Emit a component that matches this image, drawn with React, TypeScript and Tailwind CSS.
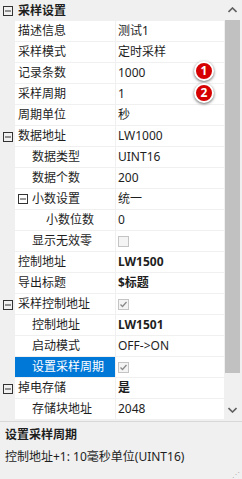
import React from "react";

type Row = {
  label: string;
  value?: string;
  level: number;
  expander?: boolean;
  category?: boolean;
  bold?: boolean;
  check?: boolean;
  checked?: boolean;
  selected?: boolean;
};

const rows: Row[] = [
  { label: "采样设置", level: 0, expander: true, category: true },
  { label: "描述信息", value: "测试1", level: 0 },
  { label: "采样模式", value: "定时采样", level: 0 },
  { label: "记录条数", value: "1000", level: 0 },
  { label: "采样周期", value: "1", level: 0 },
  { label: "周期单位", value: "秒", level: 0 },
  { label: "数据地址", value: "LW1000", level: 0, expander: true },
  { label: "数据类型", value: "UINT16", level: 1 },
  { label: "数据个数", value: "200", level: 1 },
  { label: "小数设置", value: "统一", level: 1, expander: true },
  { label: "小数位数", value: "0", level: 2 },
  { label: "显示无效零", level: 1, check: true },
  { label: "控制地址", value: "LW1500", level: 0, bold: true },
  { label: "导出标题", value: "$标题", level: 0, bold: true },
  { label: "采样控制地址", level: 0, expander: true, check: true, checked: true },
  { label: "控制地址", value: "LW1501", level: 1, bold: true },
  { label: "启动模式", value: "OFF->ON", level: 1 },
  { label: "设置采样周期", level: 1, check: true, checked: true, selected: true },
  { label: "掉电存储", value: "是", level: 0, expander: true, bold: true },
  { label: "存储块地址", value: "2048", level: 1 },
];

const indent = ["pl-[3px]", "pl-[17px]", "pl-[31px]"];

function Minus({ className }: { className?: string }) {
  return (
    <svg width="10" height="10" viewBox="0 0 10 10" className={className}>
      <rect x="0.5" y="0.5" width="9" height="9" fill="none" stroke="#333" />
      <line x1="2" y1="5" x2="8" y2="5" stroke="#333" />
    </svg>
  );
}

function Check({ checked }: { checked?: boolean }) {
  return (
    <div className="flex h-[11px] w-[11px] items-center justify-center border border-[#c4c4c4] bg-[#f4f4f4]">
      {checked && (
        <svg width="9" height="9" viewBox="0 0 9 9">
          <path d="M1.5 4.5 L3.5 6.5 L7.5 2" fill="none" stroke="#8a8a8a" strokeWidth="1.3" />
        </svg>
      )}
    </div>
  );
}

function Badge({ n }: { n: number }) {
  return (
    <div className="flex h-[20px] w-[20px] items-center justify-center rounded-full border-2 border-white bg-[#d60000] text-[12px] font-bold leading-none text-white shadow-[0_1px_3px_rgba(0,0,0,0.6)]">
      {n}
    </div>
  );
}

function PropRow({ row }: { row: Row }) {
  if (row.category) {
    return (
      <div className="flex h-[21px] items-center bg-[#f0f0f0]">
        <div className="flex w-[15px] justify-center">
          <Minus />
        </div>
        <span className="pl-[3px] font-bold">{row.label}</span>
      </div>
    );
  }
  return (
    <div className="flex h-[21px] bg-[#f0f0f0]">
      <div className="w-[15px] shrink-0 flex items-center justify-center">
        {row.expander && row.level === 0 && <Minus />}
      </div>
      <div
        className={`flex w-[100px] shrink-0 items-center border-b border-[#f0f0f0] ${indent[row.level]} ${
          row.selected ? "bg-[#0078d7] text-white" : "bg-white"
        }`}
      >
        {row.expander && row.level === 1 && <Minus className="-ml-[14px] mr-[4px]" />}
        <span className="whitespace-nowrap">{row.label}</span>
      </div>
      <div className="flex flex-1 items-center border-b border-l border-[#f0f0f0] bg-white pl-[2px]">
        {row.check ? (
          <Check checked={row.checked} />
        ) : (
          <span className={`whitespace-nowrap ${row.bold ? "font-bold" : ""}`}>{row.value}</span>
        )}
      </div>
    </div>
  );
}

export default function App() {
  return (
    <div className="flex h-[479px] w-[242px] flex-col overflow-hidden bg-[#f0f0f0] font-['Noto_Sans','Noto_Sans_CJK_SC',sans-serif] text-[12px] text-[#1e1e1e]">
      <div className="relative flex h-[421px] shrink-0">
        <div className="w-[224px] shrink-0">
          {rows.map((r, i) => (
            <PropRow key={i} row={r} />
          ))}
        </div>
        <div className="flex w-[18px] flex-col border-l border-[#f0f0f0] pr-[2px]">
          <div className="flex h-[20px] items-center justify-center bg-[#f0f0f0]">
            <svg width="9" height="6" viewBox="0 0 9 6">
              <path d="M0.5 5 L4.5 1 L8.5 5" fill="none" stroke="#606060" strokeWidth="1.6" />
            </svg>
          </div>
          <div className="h-[353px] bg-[#c1c1c1]" />
          <div className="flex-1 bg-[#f0f0f0]" />
          <div className="flex h-[22px] items-center justify-center bg-[#f0f0f0]">
            <svg width="9" height="6" viewBox="0 0 9 6">
              <path d="M0.5 1 L4.5 5 L8.5 1" fill="none" stroke="#606060" strokeWidth="1.6" />
            </svg>
          </div>
        </div>
        <div className="absolute left-[194px] top-[61px]">
          <Badge n={1} />
        </div>
        <div className="absolute left-[194px] top-[83px]">
          <Badge n={2} />
        </div>
      </div>
      <div className="relative flex-1 border-t border-[#d8d8d8] bg-[#f0f0f0] px-[5px] pt-[3px]">
        <div className="font-bold leading-[20px]">设置采样周期</div>
        <div className="mt-[2px] leading-[20px]">控制地址+1: 10毫秒单位(UINT16)</div>
        <div className="absolute bottom-[1px] right-[2px] text-[8px] leading-none text-[#b0b0b0]">⋰</div>
      </div>
    </div>
  );
}
